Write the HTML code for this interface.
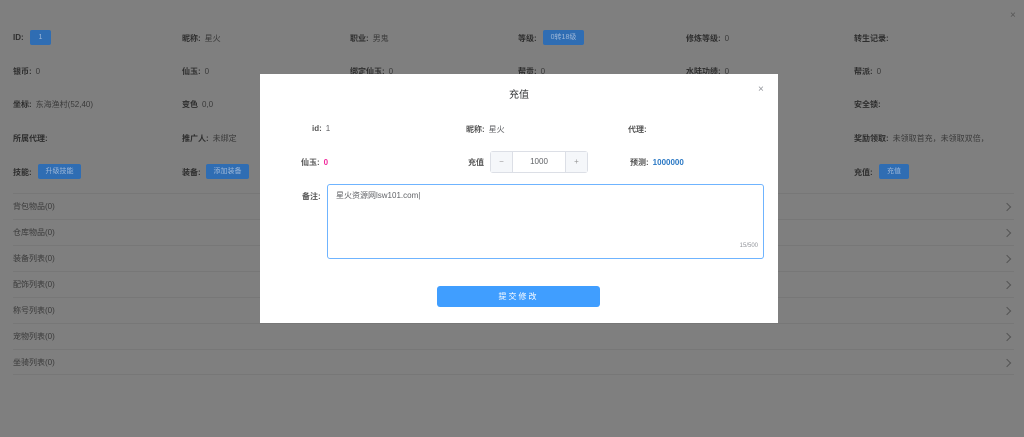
<!DOCTYPE html>
<html><head><meta charset="utf-8"><style>
*{margin:0;padding:0;box-sizing:border-box}
body{width:1024px;height:437px;overflow:hidden;background:#7f7f7f;font-family:"Liberation Sans","Noto Sans CJK SC",sans-serif;font-size:8px;color:#333;position:relative}
.a{position:absolute;white-space:nowrap}
.l{font-weight:bold;color:#2e2e2e}
.v{color:#3a3a3a;font-weight:normal;margin-left:4px}
.b{position:absolute;background:#2f6db3;color:#9fb8d8;font-size:7px;text-align:center;border-radius:2px;height:15px;line-height:15px}
.row{position:absolute;left:13px;right:10px;height:26px;border-top:1px solid #777;line-height:26px;color:#3a3a3a}
.row:after{content:"";position:absolute;right:4px;top:10px;width:5px;height:5px;border-right:1px solid #555;border-top:1px solid #555;transform:rotate(45deg)}
.m{position:absolute;left:260px;top:74px;width:518px;height:249px;background:#fff}
.ml{font-weight:bold;color:#555}
.mv{color:#606266;font-weight:normal;margin-left:4px}
</style></head><body>
<div class="a" style="left:1010px;top:10px;color:#555;font-size:10px">×</div>
<div class="a l" style="left:13px;top:33px">ID:</div><div class="b" style="left:30px;top:30px;width:21px">1</div>
<div class="a l" style="left:182px;top:33px">昵称:<span class="v">星火</span></div>
<div class="a l" style="left:350px;top:33px">职业:<span class="v">男鬼</span></div>
<div class="a l" style="left:518px;top:33px">等级:</div><div class="b" style="left:543px;top:30px;width:41px">0转18级</div>
<div class="a l" style="left:686px;top:33px">修炼等级:<span class="v">0</span></div>
<div class="a l" style="left:854px;top:33px">转生记录:</div>
<div class="a l" style="left:13px;top:66px">银币:<span class="v">0</span></div>
<div class="a l" style="left:182px;top:66px">仙玉:<span class="v">0</span></div>
<div class="a l" style="left:350px;top:66px">绑定仙玉:<span class="v">0</span></div>
<div class="a l" style="left:518px;top:66px">帮贡:<span class="v">0</span></div>
<div class="a l" style="left:686px;top:66px">水陆功绩:<span class="v">0</span></div>
<div class="a l" style="left:854px;top:66px">帮派:<span class="v">0</span></div>
<div class="a l" style="left:13px;top:99px">坐标:<span class="v">东海渔村(52,40)</span></div>
<div class="a l" style="left:182px;top:99px">变色<span class="v">0,0</span></div>
<div class="a l" style="left:854px;top:99px">安全锁:</div>
<div class="a l" style="left:13px;top:133px">所属代理:</div>
<div class="a l" style="left:182px;top:133px">推广人:<span class="v">未绑定</span></div>
<div class="a l" style="left:854px;top:133px">奖励领取:<span class="v">未领取首充，未领取双倍，</span></div>
<div class="a l" style="left:13px;top:167px">技能:</div><div class="b" style="left:38px;top:164px;width:43px">升级技能</div>
<div class="a l" style="left:182px;top:167px">装备:</div><div class="b" style="left:206px;top:164px;width:43px">添加装备</div>
<div class="a l" style="left:854px;top:167px">充值:</div><div class="b" style="left:879px;top:164px;width:30px">充值</div>
<div class="row" style="top:193px">背包物品(0)</div>
<div class="row" style="top:219px">仓库物品(0)</div>
<div class="row" style="top:245px">装备列表(0)</div>
<div class="row" style="top:271px">配饰列表(0)</div>
<div class="row" style="top:297px">称号列表(0)</div>
<div class="row" style="top:323px">宠物列表(0)</div>
<div class="row" style="top:349px;border-bottom:1px solid #777">坐骑列表(0)</div>
<div class="m">
<div class="a" style="left:0;width:518px;text-align:center;top:12px;font-size:10px;color:#303133">充值</div>
<div class="a" style="left:498px;top:10px;font-size:10px;color:#909399">×</div>
<div class="a ml" style="left:52px;top:50px">id:<span class="mv">1</span></div>
<div class="a ml" style="left:206px;top:50px">昵称:<span class="mv">星火</span></div>
<div class="a ml" style="left:368px;top:50px">代理:</div>
<div class="a ml" style="left:41px;top:83px">仙玉:<span class="mv" style="color:#f0289b;font-weight:bold">0</span></div>
<div class="a ml" style="left:208px;top:83px">充值</div>
<div class="a" style="left:230px;top:77px;width:98px;height:22px;border:1px solid #dcdfe6;border-radius:3px;background:#fff">
 <div class="a" style="left:0;top:0;width:22px;height:20px;background:#f5f7fa;border-right:1px solid #dcdfe6;text-align:center;line-height:20px;color:#999">−</div>
 <div class="a" style="left:22px;top:0;width:52px;text-align:center;line-height:20px;color:#606266">1000</div>
 <div class="a" style="right:0;top:0;width:22px;height:20px;background:#f5f7fa;border-left:1px solid #dcdfe6;text-align:center;line-height:20px;color:#999">+</div>
</div>
<div class="a ml" style="left:370px;top:83px">预测:<span class="mv" style="color:#2a78c4;font-weight:bold">1000000</span></div>
<div class="a ml" style="left:42px;top:117px">备注:</div>
<div class="a" style="left:67px;top:110px;width:437px;height:75px;border:1px solid #6fb4ff;border-radius:3px">
 <div class="a mv" style="left:4px;top:5px;font-size:8px">星火资源网lsw101.com|</div>
 <div class="a" style="right:5px;bottom:9px;font-size:6px;color:#909399">15/500</div>
</div>
<div class="a" style="left:177px;top:212px;width:163px;height:21px;background:#409eff;border-radius:3px;color:#fff;text-align:center;line-height:21px;letter-spacing:2px">提交修改</div>
</div>
</body></html>
